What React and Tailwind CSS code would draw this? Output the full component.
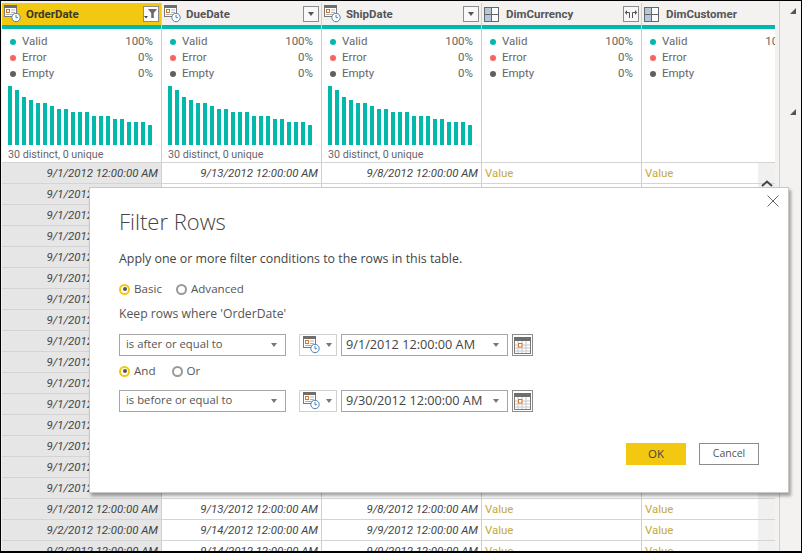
const BARS = [59, 55, 48, 45, 42, 42, 39, 36, 36, 33, 33, 33, 29, 29, 29, 26, 26, 23, 23, 23, 20];

const COLUMNS = [
  { name: 'OrderDate', type: 'date', active: true, bars: true, btn: 'filter' },
  { name: 'DueDate', type: 'date', bars: true, btn: 'menu' },
  { name: 'ShipDate', type: 'date', bars: true, btn: 'menu' },
  { name: 'DimCurrency', type: 'table', btn: 'expand' },
  { name: 'DimCustomer', type: 'table' },
];

const ROWS = [
  ['9/1/2012 12:00:00 AM', '9/13/2012 12:00:00 AM', '9/8/2012 12:00:00 AM'],
  ...Array.from({ length: 15 }, () => ['9/1/2012 12:00:00 AM', '', '']),
  ['9/1/2012 12:00:00 AM', '9/13/2012 12:00:00 AM', '9/8/2012 12:00:00 AM'],
  ['9/2/2012 12:00:00 AM', '9/14/2012 12:00:00 AM', '9/9/2012 12:00:00 AM'],
  ['9/2/2012 12:00:00 AM', '9/14/2012 12:00:00 AM', '9/9/2012 12:00:00 AM'],
];

function DateIcon() {
  return (
    <svg width="17" height="18" viewBox="0 0 17 18" className="shrink-0">
      <rect x="0.5" y="0.5" width="12" height="11" fill="#fff" stroke="#7a7a7a" />
      <rect x="0" y="0" width="13" height="3" fill="#6e6e6e" />
      <rect x="2.5" y="4.5" width="3" height="3" fill="#fff" stroke="#d9742b" />
      <path d="M7 5h4M7 7.5h4M2 9.5h9" stroke="#b0b0b0" />
      <circle cx="12" cy="12.5" r="4.2" fill="#fff" stroke="#4d7fb0" />
      <path d="M12 10v2.7h2" stroke="#4d7fb0" fill="none" />
    </svg>
  );
}

function TableIcon() {
  return (
    <svg width="15" height="15" viewBox="0 0 15 15" className="shrink-0">
      <rect x="0.5" y="0.5" width="14" height="14" fill="#fff" stroke="#666" />
      <rect x="1" y="1" width="6" height="6" fill="#b4c7dc" />
      <rect x="1" y="8" width="6" height="6" fill="#b4c7dc" />
      <path d="M0 7.5h15M7.5 0v15" stroke="#666" />
    </svg>
  );
}

function CalendarIcon() {
  return (
    <svg width="17" height="17" viewBox="0 0 17 17">
      <rect x="0.5" y="0.5" width="16" height="16" fill="#fff" stroke="#7a7a7a" />
      <rect x="0" y="0" width="17" height="4" fill="#6e6e6e" />
      <path d="M1 8h15M1 11h15M1 14h15M4 4v12M8 4v12M12 4v12" stroke="#c8c8c8" />
      <rect x="4.5" y="6.5" width="3.5" height="3.5" fill="#fff" stroke="#d9742b" />
    </svg>
  );
}

function Caret({ color = 'border-t-[#777]' }) {
  return <span className={`w-0 h-0 border-x-[3.5px] border-x-transparent border-t-[4px] ${color}`} />;
}

function HeaderButton({ kind }) {
  return (
    <span className={`absolute right-[2px] top-[3px] w-[16px] h-[16px] flex items-center justify-center border border-[#8c8c8c] ${kind === 'filter' ? 'bg-white' : 'bg-[#f8f8f8]'}`}>
      {kind === 'menu' && <Caret color="border-t-[#555]" />}
      {kind === 'filter' && (
        <svg width="14" height="12" viewBox="0 0 14 12">
          <path d="M4 1h9L9.8 5v5H7.2V5z" fill="#6b6b6b" />
          <path d="M0 8h4L2 10.5z" fill="#444" />
        </svg>
      )}
      {kind === 'expand' && (
        <svg width="14" height="10" viewBox="0 0 14 10">
          <path d="M2 3.5h3.5V9M12 3.5H8.5V9" stroke="#555" fill="none" />
          <path d="M3 1L0.8 3.5L3 6zM11 1l2.2 2.5L11 6z" fill="#555" />
        </svg>
      )}
    </span>
  );
}

function ColumnHead({ col }) {
  return (
    <div className="w-[160px] shrink-0 border-r border-[#cfcfcf]">
      <div className={`relative h-[22px] flex items-center gap-[4px] pl-[2px] text-[11.5px] font-bold ${col.active ? 'bg-[#f2c811] text-[#3a3a2a]' : 'bg-[#f3f2f1] text-[#555]'}`}>
        <span className={col.type === 'table' ? 'pr-[3px]' : 'pr-[1px]'}>
          {col.type === 'date' ? <DateIcon /> : <TableIcon />}
        </span>
        <span className="pt-[1px]">{col.name}</span>
        {col.btn && <HeaderButton kind={col.btn} />}
      </div>
      <div className="h-[4px] bg-[#01b8aa]" />
      <div className="h-[133px] bg-white overflow-hidden pl-[8px] pr-[8px] pt-[5px] text-[11.5px] text-[#666]">
        <StatRow dot="bg-[#01b8aa]" label="Valid" value="100%" />
        <StatRow dot="bg-[#fd625e]" label="Error" value="0%" />
        <StatRow dot="bg-[#5f5f5f]" label="Empty" value="0%" />
        {col.bars && (
          <>
            <div className="flex items-end gap-[3px] h-[59px] mt-[4px] -ml-[2px]">
              {BARS.map((h, i) => (
                <span key={i} className="w-[4px] bg-[#01b8aa]" style={{ height: h }} />
              ))}
            </div>
            <div className="text-[10.7px] leading-[14px] mt-[3px] -ml-[2px] text-[#666]">30 distinct, 0 unique</div>
          </>
        )}
      </div>
    </div>
  );
}

function StatRow({ dot, label, value }) {
  return (
    <div className="h-[16px] flex items-center">
      <span className={`w-[6px] h-[6px] rounded-full mr-[6px] ${dot}`} />
      <span>{label}</span>
      <span className="ml-auto">{value}</span>
    </div>
  );
}

function DataRow({ row }) {
  return (
    <div className="h-[21px] flex bg-white border-t border-[#d4d4d4] text-[11.4px] leading-[21px] text-[#444]">
      <div className="w-[160px] shrink-0 pr-[3px] text-right italic bg-[#e6e6e6] border-r border-[#cfcfcf]">{row[0]}</div>
      <div className="w-[160px] shrink-0 pr-[3px] text-right italic border-r border-[#cfcfcf]">{row[1]}</div>
      <div className="w-[160px] shrink-0 pr-[3px] text-right italic border-r border-[#cfcfcf]">{row[2]}</div>
      <div className="w-[160px] shrink-0 pl-[3px] text-[#c8a73e] border-r border-[#cfcfcf]">Value</div>
      <div className="w-[116px] shrink-0 pl-[3px] text-[#c8a73e]">Value</div>
      <div className="w-[17px] shrink-0 bg-[#f0f0f0]" />
    </div>
  );
}

function Radio({ label, on, className = '' }) {
  return (
    <span className={`flex items-center gap-[4px] ${className}`}>
      <span className={`w-[11px] h-[11px] rounded-full border-2 flex items-center justify-center ${on ? 'border-[#f2c811]' : 'border-[#999]'}`}>
        {on && <span className="w-[4px] h-[4px] rounded-full bg-[#555]" />}
      </span>
      {label}
    </span>
  );
}

function ConditionRow({ op, value }) {
  return (
    <div className="flex items-center h-[22px]">
      <div className="w-[167px] h-[22px] flex items-center justify-between border border-[#a6a6a6] pl-[6px] pr-[8px] pb-[1px] text-[11.3px] text-[#555]">
        {op}
        <Caret />
      </div>
      <div className="ml-[13px] w-[38px] h-[22px] flex items-center gap-[6px] border border-[#d0d0d0] pl-[3px]">
        <DateIcon />
        <Caret />
      </div>
      <div className="ml-[4px] w-[167px] h-[22px] flex items-center justify-between border border-[#a6a6a6] pl-[4px] pr-[8px] text-[12.7px] text-[#444]">
        {value}
        <Caret />
      </div>
      <div className="ml-[4px] w-[21px] h-[22px] flex items-center justify-center border border-[#8c8c8c]">
        <CalendarIcon />
      </div>
    </div>
  );
}

function Dialog() {
  return (
    <div className="absolute left-[88px] top-[186px] w-[700px] h-[306px] bg-white border border-[#c8c8c8] shadow-[2px_3px_3px_rgba(0,0,0,0.35)] pl-[29px] font-['Open_Sans',sans-serif] text-[12.4px] text-[#555]">
      <button className="absolute right-[9px] top-[7px] text-[#666]">
        <svg width="12" height="12" viewBox="0 0 12 12">
          <path d="M0.5 0.5l11 11M11.5 0.5l-11 11" stroke="#666" fill="none" />
        </svg>
      </button>
      <h2 className="text-[22px] leading-[30px] font-light mt-[18px] text-[#444]">Filter Rows</h2>
      <p className="mt-[14px] leading-[18px] text-[#444]">Apply one or more filter conditions to the rows in this table.</p>
      <div className="flex mt-[13px] leading-[16px] text-[11.6px]">
        <Radio label="Basic" on />
        <Radio label="Advanced" className="ml-[14px]" />
      </div>
      <p className="mt-[9px] leading-[16px] text-[12.2px]">Keep rows where 'OrderDate'</p>
      <div className="mt-[12px]">
        <ConditionRow op="is after or equal to" value="9/1/2012 12:00:00 AM" />
      </div>
      <div className="flex mt-[7px] leading-[16px] text-[11.6px]">
        <Radio label="And" on />
        <Radio label="Or" className="ml-[16px]" />
      </div>
      <div className="mt-[11px]">
        <ConditionRow op="is before or equal to" value="9/30/2012 12:00:00 AM" />
      </div>
      <div className="absolute right-[29px] bottom-[27px] flex gap-[13px]">
        <button className="w-[60px] h-[22px] bg-[#f2c811] text-[11.5px] text-[#444]">OK</button>
        <button className="w-[60px] h-[22px] bg-white border border-[#8c8c8c] text-[10.5px] text-[#555]">Cancel</button>
      </div>
    </div>
  );
}

export default function App() {
  return (
    <div className="relative w-[802px] h-[553px] overflow-hidden bg-[#f3f2f1] border border-black border-b-2 font-['Roboto',sans-serif] box-border">
      <div className="flex h-full">
        <div className="w-[774px] pl-[1px] shrink-0 overflow-hidden">
          <div className="mt-[2px] h-0 border-t border-[#d0d0d0]" />
          <div className="flex -mt-px">
            {COLUMNS.map((c) => (
              <ColumnHead key={c.name} col={c} />
            ))}
          </div>
          {ROWS.map((r, i) => (
            <DataRow key={i} row={r} />
          ))}
        </div>
        <div className="flex-1 flex pl-[4px]">
          <div className="flex-1 border-l border-[#cfcfcf] pt-[7px] pl-[10px] flex flex-col gap-[95px]">
            <span className="w-0 h-0 border-l-[6px] border-l-transparent border-b-[6px] border-b-[#555]" />
            <span className="w-0 h-0 border-l-[6px] border-l-transparent border-b-[6px] border-b-[#555]" />
          </div>
        </div>
      </div>
      {/* scrollbar arrow, sits half under the dialog */}
      <svg width="12" height="8" viewBox="0 0 12 8" className="absolute left-[760px] top-[179px]">
        <path d="M1 6l5-4.5L11 6" stroke="#444" strokeWidth="2" fill="none" />
      </svg>
      <Dialog />
    </div>
  );
}
